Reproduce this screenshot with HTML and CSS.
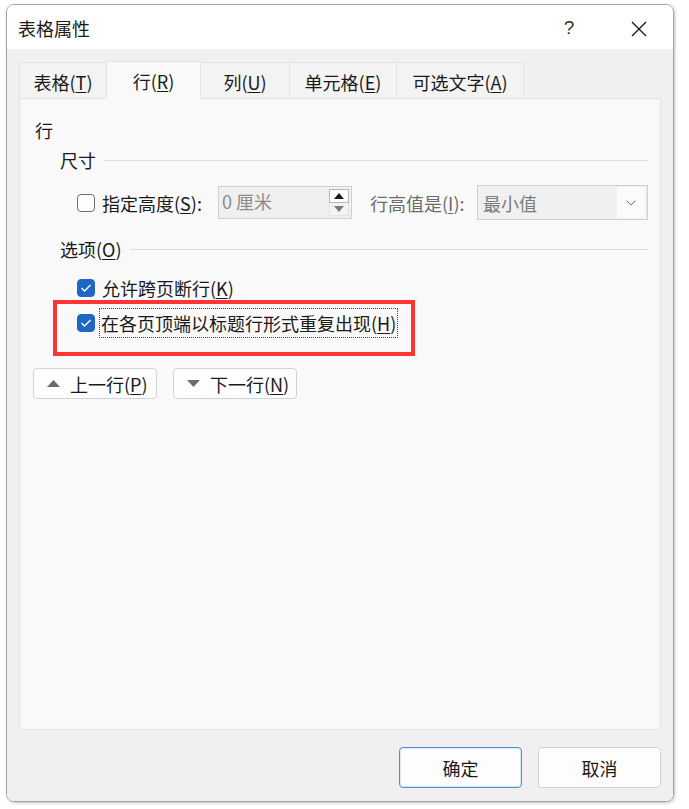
FILE: index.html
```html
<!DOCTYPE html>
<html lang="zh-CN">
<head>
<meta charset="utf-8">
<title>表格属性</title>
<link rel="stylesheet" href="styles.css">
</head>
<body>
<div class="dialog">
  <div class="titlebar">
    <div class="title">表格属性</div>
    <div class="help">?</div>
    <div class="close">
      <svg width="16" height="16" viewBox="0 0 16 16"><path d="M1 1 L15 15 M15 1 L1 15" stroke="#1a1a1a" stroke-width="1.4" fill="none"/></svg>
    </div>
  </div>
  <div class="body">
    <div class="tabs">
      <div class="tab t1">表格(<u>T</u>)</div>
      <div class="tab t2 active">行(<u>R</u>)</div>
      <div class="tab t3">列(<u>U</u>)</div>
      <div class="tab t4">单元格(<u>E</u>)</div>
      <div class="tab t5">可选文字(<u>A</u>)</div>
    </div>
    <div class="panel">
      <div class="heading">行</div>
      <div class="group"><span>尺寸</span><i class="rule"></i></div>
      <div class="sizerow">
        <span class="cb"></span>
        <span class="lbl1">指定高度(<u>S</u>):</span>
        <div class="spin">
          <span class="spinval">0 厘米</span>
          <div class="spinbtns">
            <div class="up"><svg width="10" height="6" viewBox="0 0 10 6"><path d="M0 6 L5 0 L10 6 Z" fill="#1a1a1a"/></svg></div>
            <div class="down"><svg width="10" height="6" viewBox="0 0 10 6"><path d="M0 0 L5 6 L10 0 Z" fill="#7a7a7a"/></svg></div>
          </div>
        </div>
        <span class="lbl2">行高值是(<u>I</u>):</span>
        <div class="select">
          <span class="selval">最小值</span>
          <div class="arrow"><svg width="10" height="6" viewBox="0 0 10 6"><path d="M0.5 0.5 L5 5 L9.5 0.5" stroke="#6a6a6a" stroke-width="1" fill="none"/></svg></div>
        </div>
      </div>
      <div class="group g2"><span>选项(<u>O</u>)</span><i class="rule"></i></div>
      <div class="checkrow">
        <span class="cb checked"><svg width="12" height="10" viewBox="0 0 12 10"><path d="M1.5 5 L4.5 8 L10.5 2" stroke="#fff" stroke-width="1.3" fill="none"/></svg></span>
        <span class="cbl">允许跨页断行(<u>K</u>)</span>
      </div>
      <div class="redbox">
        <div class="checkrow inbox">
          <span class="cb checked"><svg width="12" height="10" viewBox="0 0 12 10"><path d="M1.5 5 L4.5 8 L10.5 2" stroke="#fff" stroke-width="1.3" fill="none"/></svg></span>
          <span class="cbl focus">在各页顶端以标题行形式重复出现(<u>H</u>)</span>
        </div>
      </div>
      <div class="navrow">
        <div class="navbtn"><svg width="13" height="7" viewBox="0 0 13 7"><path d="M0 7 L6.5 0 L13 7 Z" fill="#6b6b6b"/></svg><span>上一行(<u>P</u>)</span></div>
        <div class="navbtn"><svg width="13" height="7" viewBox="0 0 13 7"><path d="M0 0 L6.5 7 L13 0 Z" fill="#6b6b6b"/></svg><span>下一行(<u>N</u>)</span></div>
      </div>
    </div>
    <div class="footer">
      <div class="btn primary">确定</div>
      <div class="btn">取消</div>
    </div>
  </div>
</div>
</body>
</html>
```
FILE: styles.css
```css
html, body {
  margin: 0;
  padding: 0;
  background: #ffffff;
}
body {
  font-family: "Noto Sans CJK SC", "Noto Sans", sans-serif;
  font-size: 18px;
  color: #1a1a1a;
  width: 689px;
  height: 809px;
  overflow: hidden;
}
u { text-decoration: underline; text-underline-offset: 2px; text-decoration-thickness: 1px; }

.dialog {
  margin: 4px 0 0 6px;
  width: 668px;
  height: 798px;
  box-sizing: border-box;
  border: 1px solid #a3a3a3;
  border-radius: 8px;
  overflow: hidden;
  display: flex;
  flex-direction: column;
  box-shadow: 1px 1px 3px rgba(0,0,0,0.25);
}
.titlebar {
  height: 44px;
  background: #ffffff;
  display: flex;
  align-items: center;
  padding-left: 11px;
}
.title {
  font-size: 18px;
  line-height: 24px;
  flex: 1;
  margin-top: 2px;
}
.help {
  width: 20px;
  font-size: 19px;
  line-height: 24px;
  font-family: "Liberation Sans", sans-serif;
  font-weight: 300;
  color: #333;
  text-align: center;
  margin-right: 52px;
  margin-top: 1px;
}
.close {
  width: 16px;
  height: 16px;
  margin-right: 26px;
  margin-top: 4px;
}
.close svg { display: block; }

.body {
  flex: 1;
  background: #f0f0f0;
  padding: 13px 12px 0 12px;
  display: flex;
  flex-direction: column;
}
.tabs {
  height: 36px;
  display: flex;
  align-items: flex-end;
  position: relative;
  z-index: 1;
}
.tab {
  height: 36px;
  box-sizing: border-box;
  border: 1px solid #e3e3e3;
  border-bottom: none;
  border-left: none;
  background: #f3f3f3;
  display: flex;
  align-items: center;
  justify-content: center;
  line-height: 24px;
  padding-top: 2px;
}
.t1 { width: 88px; border-left: 1px solid #e3e3e3; }
.t2 { width: 94px; }
.t3 { width: 89px; }
.t4 { width: 107px; }
.t5 { width: 127px; }
.tab.active {
  height: 38px;
  margin-bottom: -1px;
  background: #f9f9f9;
  border-color: #e3e3e3;
  padding-top: 0;
}

.panel {
  height: 632px;
  box-sizing: border-box;
  background: #f9f9f9;
  border: 1px solid #e3e3e3;
  padding: 19px 12px 0 13px;
}
.heading {
  line-height: 24px;
  margin-left: 2px;
}
.group {
  display: flex;
  align-items: center;
  line-height: 24px;
  margin-left: 27px;
  margin-top: 6px;
}
.group .rule {
  flex: 1;
  height: 1px;
  background: #dedede;
  margin-left: 8px;
  margin-top: 1px;
}
.group.g2 { margin-top: 17px; }

.sizerow {
  display: flex;
  align-items: center;
  height: 35px;
  margin-top: 13px;
  margin-left: 44px;
}
.cb {
  width: 18px;
  height: 18px;
  box-sizing: border-box;
  border: 1px solid #6e6e6e;
  border-radius: 4px;
  background: #fdfdfd;
  flex: none;
  display: flex;
  align-items: center;
  justify-content: center;
}
.cb.checked {
  background: #1e68c3;
  border-color: #1e68c3;
}
.cb svg { display: block; }
.lbl1 {
  width: 116px;
  margin-left: 7px;
  line-height: 24px;
  white-space: nowrap;
}
.spin {
  width: 134px;
  height: 33px;
  box-sizing: border-box;
  border: 1px solid #d0d0d0;
  background: #f0f0f0;
  display: flex;
  align-items: center;
  flex: none;
}
.spinval {
  flex: 1;
  color: #8c8c8c;
  padding-left: 3px;
  line-height: 24px;
  margin-top: -4px;
}
.spinbtns {
  width: 20px;
  margin-right: 2px;
  display: flex;
  flex-direction: column;
}
.spinbtns > div {
  height: 13px;
  display: flex;
  align-items: center;
  justify-content: center;
  box-sizing: border-box;
}
.spinbtns .up {
  background: #fdfdfd;
  border: 1px solid #b8b8b8;
  height: 14px;
}
.spinbtns .down {
  border: 1px solid #e2e2e2;
  border-top: none;
  background: #f3f3f3;
}
.lbl2 {
  width: 107px;
  margin-left: 18px;
  color: #6b6b6b;
  line-height: 24px;
  white-space: nowrap;
}
.select {
  flex: 1;
  height: 35px;
  box-sizing: border-box;
  border: 1px solid #cfcfcf;
  background: #f0f0f0;
  display: flex;
  align-items: center;
}
.selval {
  flex: 1;
  color: #7c7c7c;
  padding-left: 5px;
  line-height: 24px;
}
.select .arrow {
  width: 28px;
  height: 31px;
  margin-right: 2px;
  background: #fbfbfb;
  display: flex;
  align-items: center;
  justify-content: center;
}
.select .arrow svg { display: block; }

.checkrow {
  display: flex;
  align-items: center;
  height: 24px;
  margin-top: 15px;
  margin-left: 44px;
}
.cbl {
  margin-left: 7px;
  line-height: 24px;
  white-space: nowrap;
}
.redbox {
  margin-left: 20px;
  width: 362px;
  height: 56px;
  box-sizing: border-box;
  border: 4px solid #ff3535;
  padding-top: 7px;
}
.checkrow.inbox {
  margin-top: 0;
  margin-left: 20px;
}
.cbl.focus {
  margin-left: 5px;
  padding: 2px 1px 2px 1px;
  outline: 1px dotted #444;
  outline-offset: 0;
  line-height: 24px;
}

.navrow {
  display: flex;
  gap: 16px;
  margin-top: 12px;
}
.navbtn {
  width: 124px;
  height: 31px;
  box-sizing: border-box;
  border: 1px solid #d3d3d3;
  border-radius: 4px;
  background: #fdfdfd;
  display: flex;
  align-items: center;
  padding-left: 13px;
}
.navbtn svg { display: block; flex: none; }
.navbtn span {
  margin-left: 10px;
  line-height: 24px;
  white-space: nowrap;
}

.footer {
  display: flex;
  justify-content: flex-end;
  gap: 16px;
  margin-top: 17px;
  padding-right: 0;
}
.btn {
  width: 123px;
  height: 41px;
  box-sizing: border-box;
  border: 1px solid #d3d3d3;
  border-radius: 4px;
  background: #fdfdfd;
  display: flex;
  align-items: center;
  justify-content: center;
  line-height: 24px;
}
.btn.primary {
  border: 1px solid #4a90d9;
  box-shadow: inset 0 0 0 1px #dbe9f8;
}
```
